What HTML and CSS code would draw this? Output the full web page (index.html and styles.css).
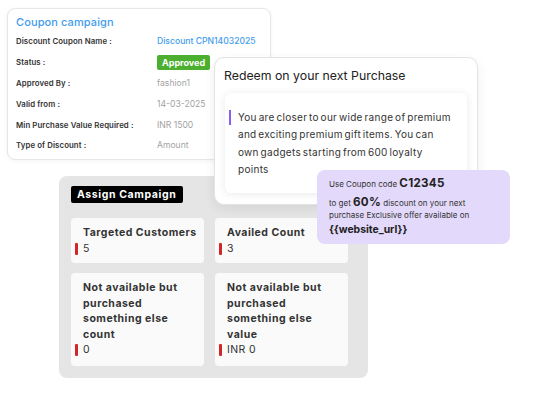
FILE: index.html
```html
<!DOCTYPE html>
<html>
<head>
<meta charset="utf-8">
<link rel="stylesheet" href="styles.css">
</head>
<body>
<div class="canvas">
  <section class="coupon-card">
    <h2 class="coupon-title">Coupon campaign</h2>
    <div class="coupon-grid">
      <div class="label">Discount Coupon Name :</div><div class="value link">Discount CPN14032025</div>
      <div class="label">Status :</div><div class="value"><span class="badge">Approved</span></div>
      <div class="label">Approved By :</div><div class="value muted">fashion1</div>
      <div class="label">Valid from :</div><div class="value muted">14-03-2025</div>
      <div class="label">Min Purchase Value Required :</div><div class="value muted">INR 1500</div>
      <div class="label">Type of Discount :</div><div class="value muted">Amount</div>
    </div>
  </section>

  <section class="assign-panel">
    <div class="assign-tag">Assign Campaign</div>
    <div class="stats">
      <div class="stat">
        <div class="stat-title">Targeted Customers</div>
        <div class="stat-value"><span class="bar"></span>5</div>
      </div>
      <div class="stat">
        <div class="stat-title">Availed Count</div>
        <div class="stat-value"><span class="bar"></span>3</div>
      </div>
      <div class="stat">
        <div class="stat-title">Not available but purchased something else count</div>
        <div class="stat-value"><span class="bar"></span>0</div>
      </div>
      <div class="stat">
        <div class="stat-title">Not available but purchased something else value</div>
        <div class="stat-value"><span class="bar"></span>INR 0</div>
      </div>
    </div>
  </section>

  <section class="redeem-card">
    <h2 class="redeem-title">Redeem on your next Purchase</h2>
    <div class="redeem-inner">
      <span class="accent"></span>
      <p class="redeem-text">You are closer to our wide range of premium and exciting premium gift items. You can own gadgets starting from 600 loyalty points</p>
    </div>
  </section>

  <aside class="promo">
    <p class="promo-line1">Use Coupon code <b class="big">C12345</b></p>
    <p class="promo-line2">to get <b class="big">60%</b> discount on your next purchase Exclusive offer available on</p>
    <p class="promo-url">{{website_url}}</p>
  </aside>
</div>
</body>
</html>
```
FILE: styles.css
```css
* { box-sizing: border-box; margin: 0; padding: 0; }
html, body { background: #fff; }
body {
  font-family: "Inter", "Open Sans", sans-serif;
  color: #333;
}
.canvas {
  position: relative;
  width: 544px;
  height: 398px;
  overflow: hidden;
}

/* Coupon card */
.coupon-card {
  position: absolute;
  left: 7px;
  top: 8px;
  width: 264px;
  height: 152px;
  background: #fff;
  border: 1px solid #e6e6e6;
  border-radius: 8px;
  box-shadow: 0 1px 4px rgba(0,0,0,0.05);
  padding: 4px 0 0 8px;
}
.coupon-title {
  font-size: 11px;
  font-weight: 500;
  color: #3f9cec;
  line-height: 18px;
  letter-spacing: 0.1px;
}
.coupon-grid {
  display: grid;
  grid-template-columns: 141px 1fr;
  grid-auto-rows: 20.8px;
  align-items: center;
}
.label {
  font-size: 7.8px;
  font-weight: 600;
  color: #333;
  letter-spacing: 0.1px;
}
.value { font-size: 8.6px; }
.link { color: #3f9cec; font-weight: 500; }
.muted { color: #a3a3a3; }
.badge {
  display: inline-block;
  background: #4caf2f;
  color: #fff;
  font-weight: 700;
  font-size: 9px;
  line-height: 15px;
  padding: 0 5px;
  border-radius: 2px;
}

/* Assign panel */
.assign-panel {
  position: absolute;
  left: 59px;
  top: 176px;
  width: 309px;
  height: 202px;
  background: #e5e5e5;
  border-radius: 8px;
  padding: 10px 20px 0 12px;
}
.assign-tag {
  display: block;
  background: #000;
  color: #fff;
  font-size: 10.5px;
  font-weight: 700;
  line-height: 17px;
  letter-spacing: 0.6px;
  padding: 0 0 0 6px;
  border-radius: 2px;
  width: 112px;
  white-space: nowrap;
}
.stats {
  margin-top: 15px;
  display: grid;
  grid-template-columns: 133px 133px;
  grid-template-rows: 45px 93px;
  column-gap: 11px;
  row-gap: 10px;
}
.stat {
  background: #fafafa;
  border-radius: 4px;
  padding: 7px 4px 0 12px;
}
.stat-title {
  font-size: 10.5px;
  font-weight: 700;
  line-height: 15.6px;
  letter-spacing: 0.5px;
  color: #333;
}
.stat-value {
  display: flex;
  align-items: center;
  font-size: 10.5px;
  line-height: 16px;
  letter-spacing: 0.4px;
  color: #333;
  margin-left: -8px;
}
.bar {
  width: 3px;
  height: 12px;
  background: #d32626;
  border-radius: 1px;
  margin-right: 5px;
}

/* Redeem card */
.redeem-card {
  position: absolute;
  left: 214px;
  top: 57px;
  width: 264px;
  height: 148px;
  background: #fff;
  border: 1px solid #e3e3e3;
  border-radius: 10px;
  box-shadow: 0 4px 12px rgba(0,0,0,0.07);
  padding: 8px 10px 0 9px;
}
.redeem-title {
  font-size: 12.3px;
  font-weight: 400;
  color: #222;
  line-height: 20px;
}
.redeem-inner {
  margin-top: 7px;
  margin-left: 1px;
  height: 100px;
  background: #fff;
  border-radius: 6px;
  box-shadow: 0 1px 8px rgba(0,0,0,0.09);
  padding: 16px 4px 0 4px;
  display: flex;
  align-items: flex-start;
}
.accent {
  flex: none;
  width: 2px;
  height: 15px;
  background: #8b5cf6;
  margin-top: 1px;
  margin-right: 7px;
}
.redeem-text {
  font-size: 10px;
  line-height: 17.3px;
  color: #333;
  width: 214.8px;
  letter-spacing: 0.3px;
  word-spacing: -1.3px;
}

/* Promo */
.promo {
  position: absolute;
  left: 317px;
  top: 170px;
  width: 193px;
  height: 74px;
  background: #e3d9fa;
  border-radius: 8px;
  padding: 7px 10px 0 12px;
  color: #333;
}
.promo-line1 { font-size: 8px; line-height: 14px; }
.promo-line2 { font-size: 8px; line-height: 12px; margin-top: 6px; width: 150px; }
.big { font-size: 11.6px; font-weight: 700; color: #222; line-height: 1; letter-spacing: 0.3px; }
.promo-url { font-size: 10.4px; font-weight: 700; line-height: 15px; margin-top: 1px; color: #222; }
```
